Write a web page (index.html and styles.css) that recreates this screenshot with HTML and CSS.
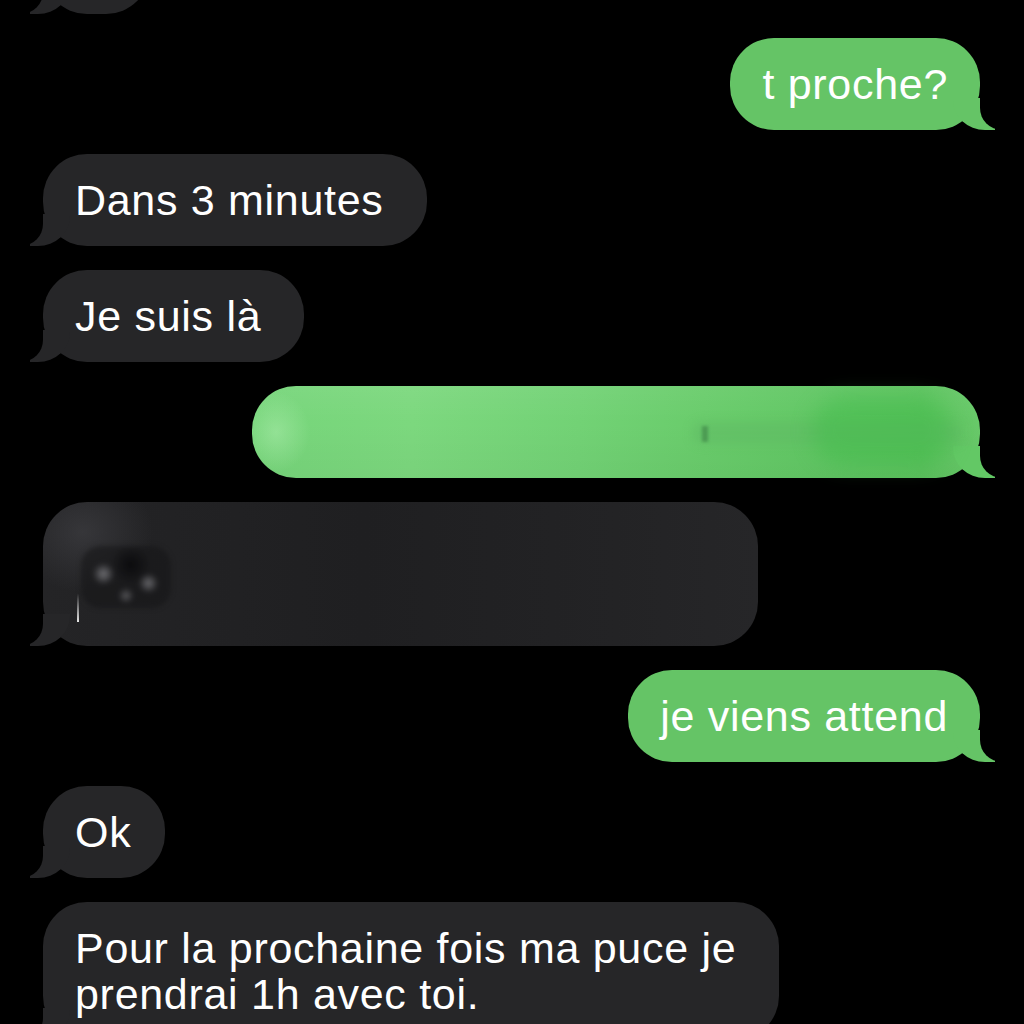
FILE: index.html
```html
<!DOCTYPE html>
<html lang="fr">
<head>
<meta charset="utf-8">
<title>Messages</title>
<link rel="stylesheet" href="styles.css">
</head>
<body>
<div class="thread">
  <div class="bubble in stub"></div>
  <div class="bubble out">t proche?</div>
  <div class="bubble in">Dans 3 minutes</div>
  <div class="bubble in">Je suis là</div>
  <div class="bubble out blur-green">
    <span class="smear smear-a"></span>
    <span class="smear smear-b"></span>
    <span class="smear smear-c"></span>
  </div>
  <div class="bubble in blur-dark">
    <span class="blot"></span>
    <span class="caret"></span>
  </div>
  <div class="bubble out">je viens attend</div>
  <div class="bubble in tight">Ok</div>
  <div class="bubble in">Pour la prochaine fois ma puce je<br>prendrai 1h avec toi.</div>
</div>
</body>
</html>
```
FILE: styles.css
```css
html, body {
  margin: 0;
  padding: 0;
  background: #000;
  height: 1024px;
  overflow: hidden;
}

.thread {
  display: flex;
  flex-direction: column;
  gap: 24px;
  padding: 0 44px 0 43px;
  font-family: "Liberation Sans", Arial, sans-serif;
  font-size: 43px;
  letter-spacing: 0.7px;
  line-height: 46px;
  color: #fff;
}

.bubble {
  position: relative;
  box-sizing: border-box;
  min-height: 92px;
  padding: 23px 32px;
  border-radius: 44px;
  white-space: nowrap;
}

.bubble.in {
  align-self: flex-start;
  background: #262628;
  padding-right: 43px;
}

.bubble.out {
  align-self: flex-end;
  background: #65c466;
}

.bubble.tight {
  padding-right: 34px;
}

/* tails */
.bubble::before,
.bubble::after {
  content: "";
  position: absolute;
  bottom: 0;
}

.bubble.in::before {
  left: -13px;
  width: 40px;
  height: 32px;
  background: #262628;
  border-bottom-right-radius: 32px 30px;
}

.bubble.in::after {
  left: -50px;
  width: 50px;
  height: 34px;
  background: #000;
  border-bottom-right-radius: 22px;
}

.bubble.out::before {
  right: -15px;
  width: 42px;
  height: 32px;
  background: #65c466;
  border-bottom-left-radius: 32px 30px;
}

.bubble.out::after {
  right: -52px;
  width: 52px;
  height: 34px;
  background: #000;
  border-bottom-left-radius: 22px;
}

.stub {
  width: 107px;
  margin-top: -78px;
}

/* blurred green message */
.bubble.blur-green {
  width: 728px;
  background:
    radial-gradient(ellipse 34px 40px at 24px 50%, rgba(175, 238, 175, 0.5), rgba(175, 238, 175, 0) 100%),
    linear-gradient(180deg, rgba(255, 255, 255, 0.05), rgba(255, 255, 255, 0) 40%, rgba(0, 0, 0, 0.03)),
    linear-gradient(90deg, #76d57a 0%, #7cd87e 22%, #72d275 45%, #69cc6b 62%, #60c663 80%, #5cc35e 92%, #68c969 100%);
}

.bubble.blur-green::before {
  background: #63c865;
}

.smear {
  position: absolute;
}

.smear-a {
  left: 440px;
  top: 36px;
  width: 270px;
  height: 22px;
  border-radius: 11px;
  background: rgba(95, 185, 100, 0.5);
  filter: blur(5px);
}

.smear-b {
  left: 560px;
  top: 10px;
  width: 140px;
  height: 70px;
  border-radius: 35px;
  background: rgba(60, 185, 70, 0.4);
  filter: blur(10px);
}

.smear-c {
  left: 450px;
  top: 40px;
  width: 6px;
  height: 16px;
  background: rgba(60, 130, 70, 0.6);
  filter: blur(1.5px);
}

/* blurred dark message */
.bubble.blur-dark {
  width: 715px;
  height: 144px;
  background:
    radial-gradient(ellipse 70px 60px at 40px 30px, rgba(62, 62, 66, 0.7), rgba(62, 62, 66, 0) 100%),
    linear-gradient(90deg, #242426 0%, #1f1f21 45%, #232325 80%, #262628 100%);
}

.blot {
  position: absolute;
  left: 38px;
  top: 44px;
  width: 90px;
  height: 62px;
  border-radius: 20px;
  background:
    radial-gradient(circle at 25% 45%, rgba(150, 150, 155, 0.7) 0, rgba(150, 150, 155, 0) 11px),
    radial-gradient(circle at 75% 60%, rgba(160, 160, 165, 0.6) 0, rgba(160, 160, 165, 0) 10px),
    radial-gradient(circle at 50% 80%, rgba(130, 130, 135, 0.6) 0, rgba(130, 130, 135, 0) 8px),
    radial-gradient(circle at 55% 30%, rgba(8, 8, 10, 0.85) 0, rgba(8, 8, 10, 0) 20px),
    rgba(22, 22, 24, 0.6);
  filter: blur(2.5px);
}

.caret {
  position: absolute;
  left: 34px;
  top: 92px;
  width: 2px;
  height: 28px;
  background: linear-gradient(#262628, #e8e8e8);
}
```
